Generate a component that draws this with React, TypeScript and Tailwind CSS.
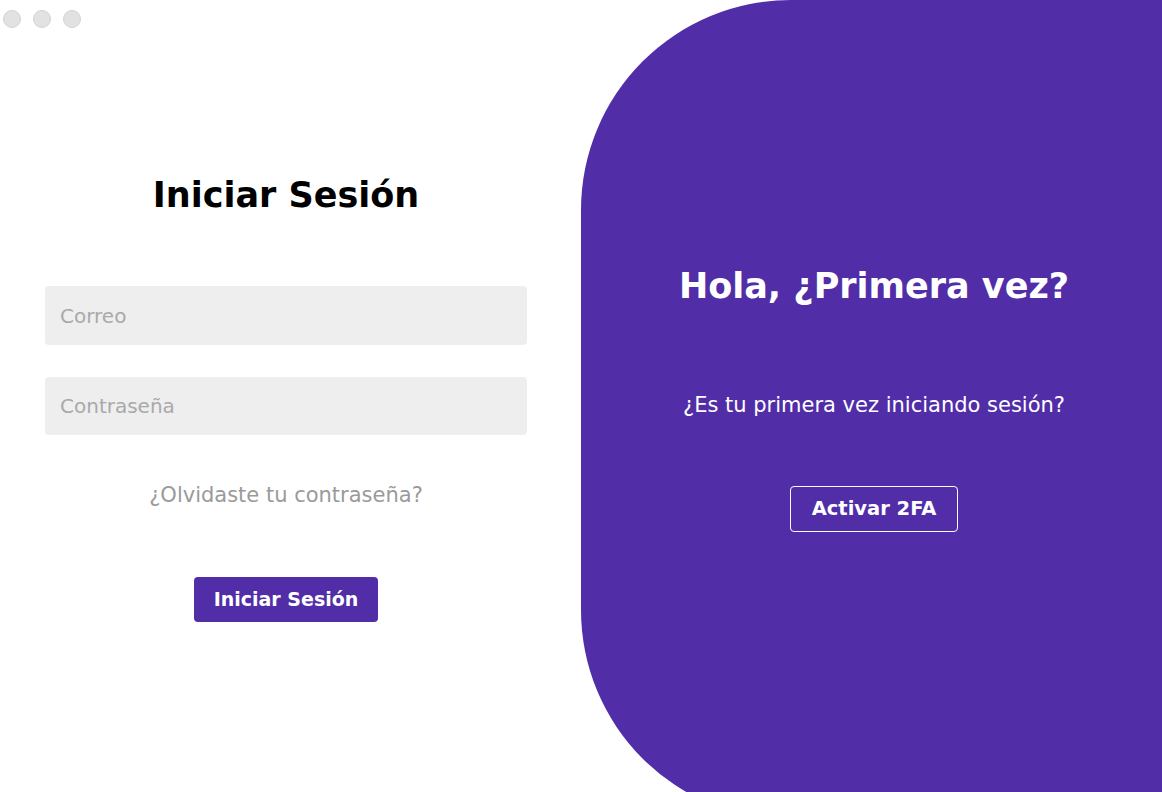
export default function App() {
  return (
    <div
      className="relative w-[1162px] h-[792px] overflow-hidden bg-white flex"
      style={{ fontFamily: '"DejaVu Sans", "Noto Sans", sans-serif' }}
    >
      {/* window controls */}
      <div className="absolute left-[3px] top-[10px] flex gap-[12px]">
        <span className="w-[18px] h-[18px] rounded-full bg-[#e2e2e2] border border-[#d3d3d3]" />
        <span className="w-[18px] h-[18px] rounded-full bg-[#e2e2e2] border border-[#d3d3d3]" />
        <span className="w-[18px] h-[18px] rounded-full bg-[#e2e2e2] border border-[#d3d3d3]" />
      </div>

      {/* Login form */}
      <div className="w-[581px] shrink-0 flex flex-col items-center pt-[173px] pr-[9px]">
        <h1 className="text-[35px] leading-[44px] font-bold text-black">Iniciar Sesión</h1>
        <input
          placeholder="Correo"
          className="mt-[69px] w-[482px] h-[59px] rounded-[4px] bg-[#eeeeee] px-[15px] text-[20px] text-[#555] placeholder:text-[#a9a9a9] outline-none"
        />
        <input
          type="password"
          placeholder="Contraseña"
          className="mt-[32px] w-[482px] h-[58px] rounded-[4px] bg-[#eeeeee] px-[15px] text-[20px] text-[#555] placeholder:text-[#a9a9a9] outline-none"
        />
        <a className="mt-[47px] text-[21px] leading-[26px] text-[#9a9a9a] cursor-pointer">
          ¿Olvidaste tu contraseña?
        </a>
        <button className="mt-[69px] w-[184px] h-[45px] rounded-[4px] bg-[#512da8] text-white text-[19px] font-bold">
          Iniciar Sesión
        </button>
      </div>

      {/* Sign-up side */}
      <div className="w-[581px] h-[820px] shrink-0 bg-[#512da8] rounded-l-[210px] flex flex-col items-center pt-[264px] pl-[5px] text-white">
        <h2 className="text-[35px] leading-[44px] font-bold">Hola, ¿Primera vez?</h2>
        <p className="mt-[84px] text-[21px] leading-[26px]">¿Es tu primera vez iniciando sesión?</p>
        <button className="mt-[68px] w-[168px] h-[46px] rounded-[4px] border-[1.5px] border-white text-[19.5px] font-bold">
          Activar 2FA
        </button>
      </div>
    </div>
  );
}
